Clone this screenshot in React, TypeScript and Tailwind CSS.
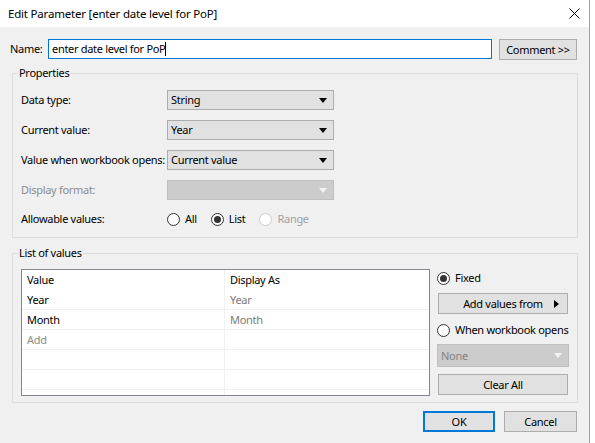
import React from "react";

const font = { fontFamily: '"Noto Sans", "Liberation Sans", sans-serif' };

const Arrow: React.FC<{ disabled?: boolean; right?: boolean }> = ({ disabled, right }) =>
  right ? (
    <svg width="5" height="8" viewBox="0 0 5 8" className="shrink-0">
      <path d="M0 0 L5 4 L0 8 Z" fill="#000" />
    </svg>
  ) : (
    <svg width="8" height="5" viewBox="0 0 8 5" className="shrink-0">
      <path d="M0 0 H8 L4 5 Z" fill={disabled ? "#f4f4f4" : "#000"} />
    </svg>
  );

const Select: React.FC<{ value?: string; disabled?: boolean; className?: string }> = ({ value, disabled, className }) => (
  <div
    className={
      "flex items-center justify-between pl-[3px] pr-[6px] border " +
      (disabled ? "bg-[#cccccc] border-[#bfbfbf] text-[#838383] " : "bg-[#e1e1e1] border-[#adadad] text-black ") +
      (className ?? "")
    }
  >
    <span>{value}</span>
    <Arrow disabled={disabled} />
  </div>
);

const Radio: React.FC<{ checked?: boolean; disabled?: boolean; label: string }> = ({ checked, disabled, label }) => (
  <div className={"flex items-center gap-[5px] whitespace-nowrap " + (disabled ? "text-[#a0a0a0]" : "text-black")}>
    <span
      className={
        "w-[13px] h-[13px] rounded-full border bg-white flex items-center justify-center shrink-0 " +
        (disabled ? "border-[#cccccc]" : "border-[#333333]")
      }
    >
      {checked && <span className="w-[7px] h-[7px] rounded-full bg-[#333333]" />}
    </span>
    <span>{label}</span>
  </div>
);

const Button: React.FC<{ children: React.ReactNode; className?: string; primary?: boolean }> = ({ children, className, primary }) => (
  <div
    className={
      "flex items-center justify-center bg-[#e1e1e1] whitespace-nowrap " +
      (primary ? "border-2 border-[#0078d7] " : "border border-[#adadad] ") +
      (className ?? "")
    }
  >
    {children}
  </div>
);

const PropRow: React.FC<{ label: string; disabled?: boolean; children: React.ReactNode; className?: string }> = ({ label, disabled, children, className }) => (
  <div className={"flex items-center h-[20px] " + (className ?? "")}>
    <span className={"w-[146px] whitespace-nowrap " + (disabled ? "text-[#8c8c8c]" : "")}>{label}</span>
    {children}
  </div>
);

const rows: { value: string; display: string; add?: boolean }[] = [
  { value: "Year", display: "Year" },
  { value: "Month", display: "Month" },
  { value: "Add", display: "", add: true },
  { value: "", display: "" },
  { value: "", display: "" },
  { value: "", display: "" },
];

export default function App() {
  return (
    <div className="w-[595px] h-[443px] bg-white overflow-hidden text-[11px] leading-[16px] tracking-[-0.3px] text-black" style={font}>
      <div className="w-[590px] h-full border-r border-[#a0a0a0] flex flex-col">
        {/* title bar */}
        <div className="h-[27px] bg-white flex items-center justify-between pl-[8px] pr-[9px] shrink-0">
          <span className="text-[11.5px] tracking-[-0.2px]">Edit Parameter [enter date level for PoP]</span>
          <svg width="11" height="11" viewBox="0 0 11 11">
            <path d="M0.5 0.5 L10.5 10.5 M10.5 0.5 L0.5 10.5" stroke="#000" strokeWidth="1" />
          </svg>
        </div>

        <div className="flex-1 bg-[#f0f0f0] pl-[10px] pr-[11px] pt-[12px]">
          {/* name */}
          <div className="flex items-start">
            <span className="w-[38px] h-[20px] flex items-center">Name:</span>
            <div className="w-[444px] h-[20px] border border-[#0078d7] bg-white flex items-center pl-[3px]">
              <span>enter date level for PoP</span>
              <span className="w-px h-[14px] bg-black" />
            </div>
            <Button className="ml-[7px] w-[78px] h-[21px]">Comment &gt;&gt;</Button>
          </div>

          {/* properties */}
          <fieldset className="ml-[2px] mt-[5px] w-[566px] h-[173px] border border-[#dcdcdc] pl-[8px]">
            <legend className="-ml-[3px] px-[1px]">Properties</legend>
            <PropRow label="Data type:" className="mt-[9px]">
              <Select value="String" className="w-[167px] h-[20px]" />
            </PropRow>
            <PropRow label="Current value:" className="mt-[10px]">
              <Select value="Year" className="w-[167px] h-[20px]" />
            </PropRow>
            <PropRow label="Value when workbook opens:" className="mt-[10px]">
              <Select value="Current value" className="w-[167px] h-[20px]" />
            </PropRow>
            <PropRow label="Display format:" disabled className="mt-[10px]">
              <Select disabled className="w-[167px] h-[20px]" />
            </PropRow>
            <PropRow label="Allowable values:" className="mt-[9px]">
              <div className="flex items-center gap-[14px]">
                <Radio label="All" />
                <Radio label="List" checked />
                <Radio label="Range" disabled />
              </div>
            </PropRow>
          </fieldset>

          {/* list of values */}
          <fieldset className="ml-[2px] mt-[7px] w-[566px] h-[158px] border border-[#dcdcdc] pl-[8px]">
            <legend className="-ml-[3px] px-[1px]">List of values</legend>
            <div className="flex mt-[8px]">
              <div className="w-[409px] h-[127px] border border-[#828790] bg-white overflow-hidden">
                <div className="flex h-[20px]">
                  <div className="w-[203px] pl-[5px] flex items-center border-r border-[#f0f0f0]">Value</div>
                  <div className="flex-1 pl-[5px] flex items-center">Display As</div>
                </div>
                {rows.map((r, i) => (
                  <div key={i} className="flex h-[20px] border-b border-[#f0f0f0]">
                    <div className={"w-[203px] pl-[5px] flex items-center border-r border-[#f0f0f0] " + (r.add ? "text-[#8a8a8a]" : "")}>
                      {r.value}
                    </div>
                    <div className="flex-1 pl-[5px] flex items-center text-[#7a7a7a]">{r.display}</div>
                  </div>
                ))}
              </div>

              <div className="ml-[7px] w-[132px] flex flex-col">
                <div className="h-[18px] flex items-center">
                  <Radio label="Fixed" checked />
                </div>
                <Button className="mt-[6px] ml-px w-[130px] h-[21px] relative">
                  <span>Add values from</span>
                  <span className="absolute right-[8px] top-[6px]">
                    <Arrow right />
                  </span>
                </Button>
                <div className="h-[18px] flex items-center mt-[7px]">
                  <Radio label="When workbook opens" />
                </div>
                <Select value="None" disabled className="mt-[5px] w-[132px] h-[23px]" />
                <Button className="mt-[7px] ml-px w-[130px] h-[21px]">Clear All</Button>
              </div>
            </div>
          </fieldset>

          {/* footer */}
          <div className="flex justify-end gap-[9px] mt-[8px] w-[567px]">
            <Button primary className="w-[72px] h-[21px]">OK</Button>
            <Button className="w-[73px] h-[21px]">Cancel</Button>
          </div>
        </div>
      </div>
    </div>
  );
}
